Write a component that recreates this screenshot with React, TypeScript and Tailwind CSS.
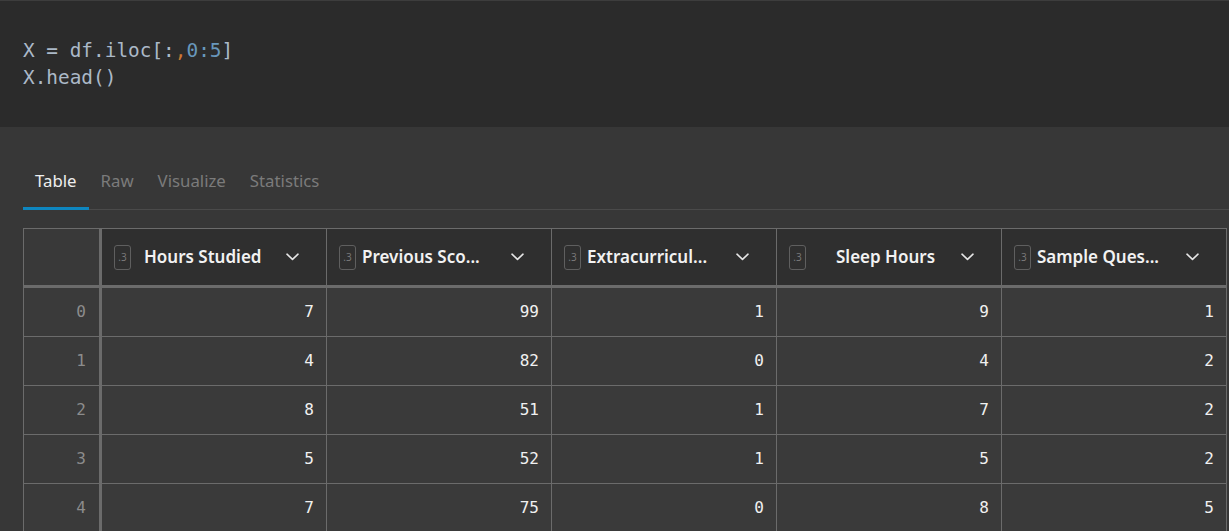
import React from "react";

const cols = [
  { name: "Hours Studied", textCls: "ml-[13px]" },
  { name: "Previous Sco...", textCls: "ml-[6px]" },
  { name: "Extracurricul...", textCls: "ml-[6px]" },
  { name: "Sleep Hours", textCls: "ml-[30px]" },
  { name: "Sample Ques...", textCls: "ml-[6px]" },
];

const rows = [
  [7, 99, 1, 9, 1],
  [4, 82, 0, 4, 2],
  [8, 51, 1, 7, 2],
  [5, 52, 1, 5, 2],
  [7, 75, 0, 8, 5],
];

const mono = { fontFamily: '"DejaVu Sans Mono", "Liberation Mono", monospace' };

function Chevron() {
  return (
    <svg width="13" height="8" viewBox="0 0 13 8" className="shrink-0">
      <path d="M1 1.2 L6.5 6.4 L12 1.2" fill="none" stroke="#e6e6e6" strokeWidth="1.6" strokeLinecap="round" strokeLinejoin="round" />
    </svg>
  );
}

function Badge() {
  return (
    <div className="w-[17px] h-[25px] shrink-0 rounded-[3px] border border-[#5f5f5f] flex items-center justify-center text-[10px] text-[#7c7c7c] leading-none" style={{ fontFamily: '"Open Sans", sans-serif' }}>
      .3
    </div>
  );
}

export default function App() {
  return (
    <div className="w-[1229px] h-[531px] overflow-hidden bg-[#373737]">
      {/* code cell */}
      <div className="h-[127px] bg-[#2b2b2b] border-t border-[#3d3d3d] pt-[36px] pl-[23px] text-[19.4px] leading-[27px] text-[#abb9c8]" style={mono}>
        <div>
          X = df.iloc[:<span className="text-[#cc7832]">,</span><span className="text-[#6897bb]">0:5</span>]
        </div>
        <div>X.head()</div>
      </div>

      {/* output */}
      <div className="pl-[23px] pt-[42px]" style={{ fontFamily: '"Noto Sans", "Open Sans", sans-serif' }}>
        <div className="flex border-b border-[#4a4a4a] text-[16.8px] leading-[24px]">
          <div className="px-3 pb-[14px] -mb-px border-b-[3px] border-[#0e86bf] text-[#eeeeee]">Table</div>
          <div className="px-3 pb-[14px] text-[#7b7b7b]">Raw</div>
          <div className="px-3 pb-[14px] text-[#7b7b7b]">Visualize</div>
          <div className="px-3 pb-[14px] text-[#7b7b7b]">Statistics</div>
        </div>

        <div className="mt-[18px] w-[1204px] border-l border-t border-[#6b6b6b]">
          {/* header */}
          <div className="flex h-[59px] border-b-[3px] border-[#6b6b6b] bg-[#2f2f2f]">
            <div className="w-[78px] shrink-0 border-r-[3px] border-[#6b6b6b] bg-[#393939]" />
            {cols.map((c) => (
              <div key={c.name} className="w-[225px] shrink-0 border-r border-[#6b6b6b] flex items-center pl-[12px] pr-[27px]">
                <Badge />
                <span className={`${c.textCls} text-[17px] font-semibold text-[#f2f2f2] whitespace-nowrap`}>{c.name}</span>
                <span className="ml-auto">
                  <Chevron />
                </span>
              </div>
            ))}
          </div>
          {/* body */}
          {rows.map((r, i) => (
            <div key={i} className="flex h-[49px] border-b border-[#6b6b6b] bg-[#3a3a3a]">
              <div className="w-[78px] shrink-0 border-r-[3px] border-[#6b6b6b] flex items-center justify-end pr-[13px] text-[16px] text-[#8c8c8c]" style={mono}>
                {i}
              </div>
              {r.map((v, j) => (
                <div key={j} className="w-[225px] shrink-0 border-r border-[#6b6b6b] flex items-center justify-end pr-[12px] text-[16px] text-[#f0f0f0]" style={mono}>
                  {v}
                </div>
              ))}
            </div>
          ))}
        </div>
      </div>
    </div>
  );
}
